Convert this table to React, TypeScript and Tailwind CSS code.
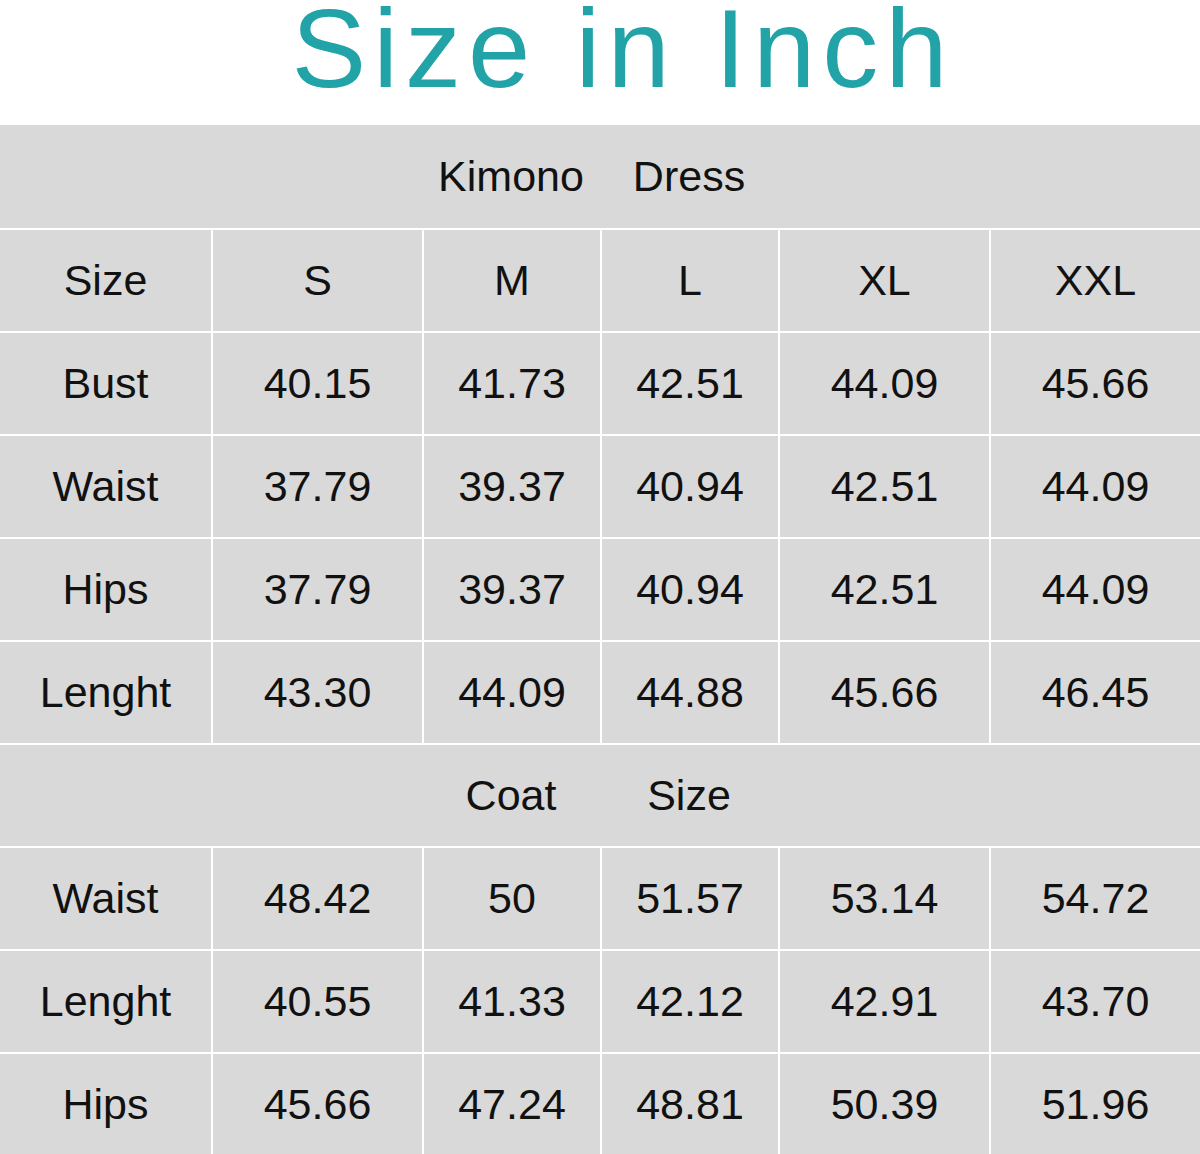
import React from 'react';

const cols = 'grid grid-cols-[211px_211px_178px_178px_211px_211px]';

type Row = { kind: 'head'; a: string; b: string } | { kind: 'data'; cells: string[] };

const rows: Row[] = [
  { kind: 'head', a: 'Kimono', b: 'Dress' },
  { kind: 'data', cells: ['Size', 'S', 'M', 'L', 'XL', 'XXL'] },
  { kind: 'data', cells: ['Bust', '40.15', '41.73', '42.51', '44.09', '45.66'] },
  { kind: 'data', cells: ['Waist', '37.79', '39.37', '40.94', '42.51', '44.09'] },
  { kind: 'data', cells: ['Hips', '37.79', '39.37', '40.94', '42.51', '44.09'] },
  { kind: 'data', cells: ['Lenght', '43.30', '44.09', '44.88', '45.66', '46.45'] },
  { kind: 'head', a: 'Coat', b: 'Size' },
  { kind: 'data', cells: ['Waist', '48.42', '50', '51.57', '53.14', '54.72'] },
  { kind: 'data', cells: ['Lenght', '40.55', '41.33', '42.12', '42.91', '43.70'] },
  { kind: 'data', cells: ['Hips', '45.66', '47.24', '48.81', '50.39', '51.96'] },
];

export default function App() {
  return (
    <div className="w-[1200px] h-[1154px] bg-white font-['Liberation_Sans',Arial,sans-serif] text-[#111]">
      <div className="h-[125px] flex items-start justify-center pl-[46px]">
        <h1 className="text-[112px] leading-[100px] tracking-[7px] text-[#21a3a8] mt-[-1px]">Size in Inch</h1>
      </div>
      <div className="bg-[#d9d9d9] text-[43px]">
        {rows.map((row, i) => (
          <div
            key={i}
            className={`${cols} ${i === 0 ? 'h-[103px]' : 'h-[103px] border-t-2 border-white'} ${i === rows.length - 1 ? 'h-[101px]' : ''}`}
          >
            {row.kind === 'head' ? (
              <>
                <div />
                <div />
                <div className="flex items-center justify-center">{row.a}</div>
                <div className="flex items-center justify-center">{row.b}</div>
                <div />
                <div />
              </>
            ) : (
              row.cells.map((c, j) => (
                <div
                  key={j}
                  className={`flex items-center justify-center ${j > 0 ? 'border-l-2 border-white' : ''}`}
                >
                  {c}
                </div>
              ))
            )}
          </div>
        ))}
      </div>
    </div>
  );
}
